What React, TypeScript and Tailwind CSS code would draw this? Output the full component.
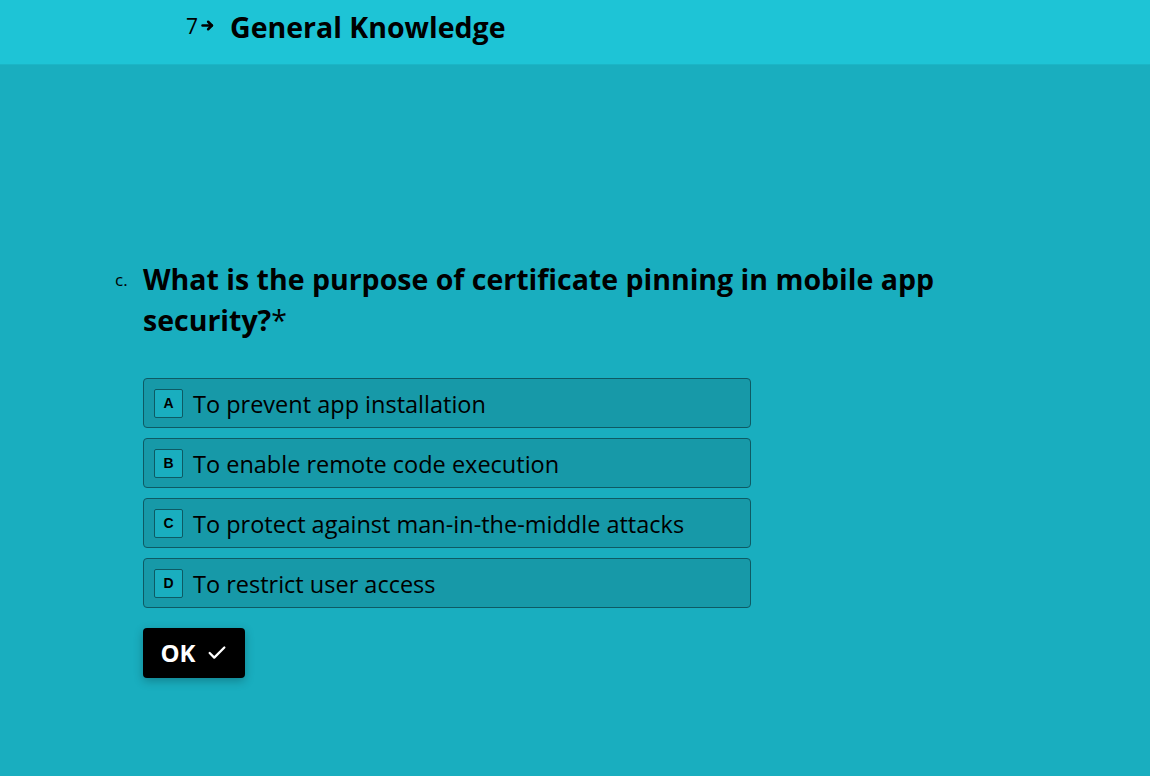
import { Check } from "lucide-react";

const options = [
  { key: "A", label: "To prevent app installation" },
  { key: "B", label: "To enable remote code execution" },
  { key: "C", label: "To protect against man-in-the-middle attacks" },
  { key: "D", label: "To restrict user access" },
];

export default function App() {
  return (
    <div className="min-h-screen h-[776px] bg-[#19aebf] text-black font-['Open_Sans',sans-serif] overflow-hidden">
      {/* Header */}
      <div className="h-[65px] bg-[#1ec4d6] border-b border-[#1bb5c6] flex items-start pt-[10px] pl-[186px]">
        <span className="text-[21px] leading-[30px] mt-[1px]">7</span>
        <svg width="15" height="15" viewBox="0 0 24 24" className="ml-[2px] mt-[8px]" fill="none" stroke="black" strokeWidth="4" strokeLinecap="round" strokeLinejoin="round">
          <path d="M4 12h15" />
          <path d="M13 6l6 6-6 6" />
        </svg>
        <h1 className="ml-[15px] text-[28.5px] font-bold leading-[34px]">General Knowledge</h1>
      </div>

      <div className="pl-[115px] pt-[194px]">
        <div className="flex items-start w-[900px]">
          <span className="w-[28px] text-[17px] mt-[12px] shrink-0 leading-none">c.</span>
          <h2 className="text-[28.5px] font-bold leading-[41px]">
            What is the purpose of certificate pinning in mobile app security?
            <span className="font-normal">*</span>
          </h2>
        </div>

        <div className="ml-[28px] mt-[37px] flex flex-col gap-[10px] w-[608px]">
          {options.map((o) => (
            <div key={o.key} className="h-[50px] bg-[#1799a8] border border-[#0d5a64] rounded-[4px] flex items-center px-[10px]">
              <span className="w-[29px] h-[29px] shrink-0 border border-[#0d5a64] rounded-[2px] bg-[#19aebf] flex items-center justify-center text-[14px] font-bold font-['Liberation_Sans',sans-serif]">
                {o.key}
              </span>
              <span className="ml-[10px] mt-[3px] text-[23.5px] leading-none">{o.label}</span>
            </div>
          ))}
        </div>

        <button className="ml-[28px] mt-[20px] h-[50px] w-[102px] bg-black text-white rounded-[4px] shadow-[0_3px_10px_rgba(0,0,0,0.25)] flex items-center justify-center gap-[10px]">
          <span className="text-[24px] font-bold leading-none">OK</span>
          <Check size={22} strokeWidth={2.5} />
        </button>
      </div>
    </div>
  );
}
